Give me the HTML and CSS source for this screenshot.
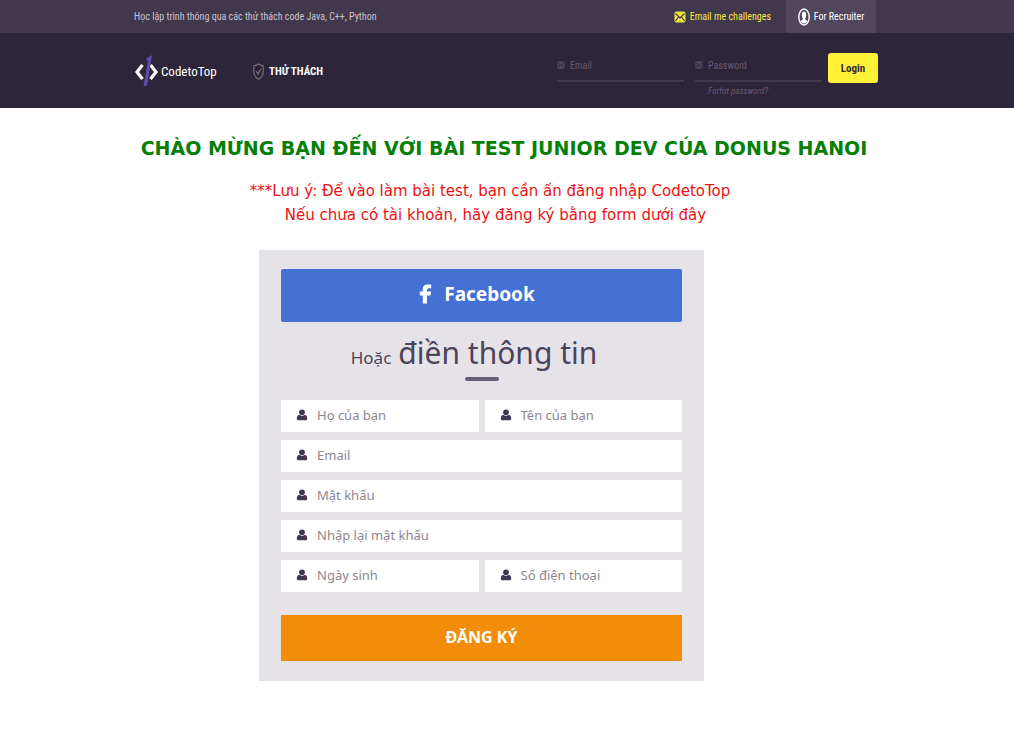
FILE: index.html
```html
<!DOCTYPE html>
<html lang="vi">
<head>
<meta charset="utf-8">
<meta name="viewport" content="width=device-width, initial-scale=1">
<title>CodetoTop</title>
<link rel="stylesheet" href="styles.css">
</head>
<body>
<svg class="sprite" aria-hidden="true">
  <symbol id="user" viewBox="0 0 12 12"><circle cx="6" cy="3.3" r="2.9"/><path d="M3 5.8Q6 8 9 5.8Q11.300 6.300 11.300 9.300Q11.300 11.300 9.800 11.300H2.200Q.7 11.300.7 9.300Q.7 6.300 3 5.800Z"/></symbol>
  <symbol id="mail" viewBox="0 0 12 12"><rect x=".5" y=".5" width="11" height="11" rx="2" fill="currentColor"/><path d="M1.500 2.500 6 7l4.500-4.500M1.500 10 4.500 6M10.500 10 7.500 6" fill="none" stroke="var(--line)" stroke-width="1.200"/></symbol>
</svg>
<header>
  <div class="topbar">
    <p class="tagline">Học lập trình thông qua các thử thách code Java, C++, Python</p>
    <nav class="links">
      <a class="challenges" href="#"><svg class="mail"><use href="#mail"/></svg>Email me challenges</a>
      <a class="recruiter" href="#"><svg class="avatar" viewBox="0 0 12 18"><ellipse cx="6" cy="9" rx="5.200" ry="8" fill="#51465d" stroke="#fff" stroke-width="1.400"/><ellipse cx="6" cy="7" rx="2.200" ry="3.500" fill="#fff"/><path d="M4.800 9h2.400v2.500l2.300 1.500Q8.300 15.500 6 15.500T2.500 13l2.300-1.500Z" fill="#fff"/></svg>For Recruiter</a>
    </nav>
  </div>
  <div class="navbar">
    <a class="brand" href="#"><svg class="logo" viewBox="0 0 24 32"><path d="M8.500 10 3 17l5.500 7M16.500 10l5.500 7-5.500 7" fill="none" stroke="#fff" stroke-width="3.200"/><path d="M12.500 3.500 18 0 13 31H9.500L14 5.500 12.500 6Z" fill="#6249a8"/></svg>CodetoTop</a>
    <a class="menu" href="#"><svg class="shield" viewBox="0 0 10 16"><path d="M5 .8Q7 2.500 9.400 2.500V8.500Q9.400 13 5 15.200Q.6 13 .6 8.500V2.500Q3 2.500 5 .8Z"/><path d="m2.800 7.800 1.700 2.400L7.400 5.600"/></svg>THỬ THÁCH</a>
    <form class="login">
      <label class="cred"><svg class="tiny"><use href="#mail"/></svg><input type="email" placeholder="Email" aria-label="Email"></label>
      <div class="secret">
        <label class="cred"><svg class="tiny"><use href="#mail"/></svg><input type="password" placeholder="Password" aria-label="Password"></label>
        <a class="forgot" href="#">Forfot password?</a>
      </div>
      <button class="enter" type="button">Login</button>
    </form>
  </div>
</header>
<main>
  <h1>CHÀO MỪNG BẠN ĐẾN VỚI BÀI TEST JUNIOR DEV CÚA DONUS HANOI</h1>
  <p class="note">***Lưu ý: Để vào làm bài test, bạn cần ấn đăng nhập CodetoTop</p>
  <p class="note hint">Nếu chưa có tài khoản, hãy đăng ký bằng form dưới đây</p>
  <form class="card">
    <button class="facebook" type="button"><svg class="fb" viewBox="0 0 12 20"><path d="M3.300 19.500V11.500H.3V7.500H3.300V5Q3.300.5 8 .5H11.700V4.300H9Q7.500 4.300 7.500 5.800V7.500H11.600L11 11.500H7.500V19.500Z"/></svg>Facebook</button>
    <h2><small>Hoặc</small> điền thông tin</h2>
    <div class="fields">
      <label class="field half"><svg class="user"><use href="#user"/></svg><input type="text" placeholder="Họ của bạn" aria-label="Họ của bạn"></label>
      <label class="field half"><svg class="user"><use href="#user"/></svg><input type="text" placeholder="Tên của bạn" aria-label="Tên của bạn"></label>
      <label class="field"><svg class="user"><use href="#user"/></svg><input type="email" placeholder="Email" aria-label="Email"></label>
      <label class="field"><svg class="user"><use href="#user"/></svg><input type="password" placeholder="Mật khẩu" aria-label="Mật khẩu"></label>
      <label class="field"><svg class="user"><use href="#user"/></svg><input type="password" placeholder="Nhập lại mật khẩu" aria-label="Nhập lại mật khẩu"></label>
      <label class="field half"><svg class="user"><use href="#user"/></svg><input type="text" placeholder="Ngày sinh" aria-label="Ngày sinh"></label>
      <label class="field half"><svg class="user"><use href="#user"/></svg><input type="tel" placeholder="Số điện thoại" aria-label="Số điện thoại"></label>
    </div>
    <button class="register" type="button">ĐĂNG KÝ</button>
  </form>
</main>
</body>
</html>
```
FILE: styles.css
```css
* { box-sizing: border-box; }
body { margin: 0; background: #fff; font-family: "DejaVu Sans", sans-serif; }
h1, h2, p { margin: 0; }
a { color: inherit; text-decoration: none; }
button, input { border: 0; font: inherit; }
svg { flex: none; }
.sprite { display: none; }

header { background: #2d2539; color: #fff; font-family: "Roboto Condensed", Roboto, sans-serif; white-space: nowrap; }
.topbar, .navbar, .links, .links a, .brand, .menu, .login, .cred { display: flex; }
.topbar { justify-content: space-between; align-items: center; height: 33px; padding: 0 138px 0 134px; background: #42384e; font-size: 10px; }
.tagline { color: #c8c3cd; }
.links { gap: 15px; height: 100%; }
.links a { align-items: center; gap: 4px; }
.challenges { color: #f3e93e; --line: #42384e; }
.mail { width: 12px; height: 12px; }
.recruiter { width: 90px; justify-content: center; background: #51465d; }
.avatar { width: 12px; height: 18px; }

.navbar { align-items: flex-start; height: 75px; padding: 20px 136px 0 134px; }
.brand { align-items: center; gap: 3px; width: 119px; height: 36px; font-size: 13px; }
.logo { width: 24px; height: 32px; }
.menu { align-items: center; gap: 5px; height: 36px; font-size: 11px; font-weight: bold; }
.shield { width: 11px; height: 17px; fill: none; stroke: #81798a; stroke-width: 1; }
.login { gap: 11px; margin-left: auto; font-size: 10px; color: #665a74; }
.cred { align-items: center; gap: 5px; width: 127px; height: 29px; padding-bottom: 3px; border-bottom: 2px solid #43384f; --line: #2d2539; }
.cred input { width: 100%; min-width: 0; padding: 0; background: none; color: #d8d2df; }
.cred input::placeholder { color: #665a74; opacity: 1; }
.tiny { width: 8px; height: 8px; color: #51465d; }
.forgot { display: block; padding: 4px 0 0 13px; font-size: 9px; font-style: italic; }
.enter { width: 50px; height: 30px; margin-left: -5px; padding: 0; border-radius: 3px; background: #fff137; color: #352c35; font-size: 11px; font-weight: bold; }

main { display: flex; flex-direction: column; align-items: center; padding: 27px 0 62px; }
h1 { padding-right: 6px; color: #067f06; font-size: 19px; line-height: 26px; }
.note { margin-top: 18px; padding-right: 34px; color: #ee1111; font-size: 15px; line-height: 24px; }
.hint { margin-top: 0; padding-right: 23px; }
.card { width: 445px; margin: 23px 51px 0 0; padding: 19px 22px 20px; background: #e5e3e8; font-family: "Noto Sans", sans-serif; }
.facebook, .register { display: flex; justify-content: center; align-items: center; width: 100%; color: #fff; font-weight: bold; }
.facebook { gap: 12px; height: 53px; padding: 0 9px 3px 0; border-radius: 2px; background: #4471d3; font-size: 19px; }
.fb { width: 13px; height: 20px; fill: #fff; }
h2 { display: flex; flex-wrap: wrap; justify-content: center; align-items: baseline; gap: 0 7px; padding: 11px 15px 0 0; color: #4b4359; font-size: 30px; font-weight: normal; line-height: 40px; }
h2 small { font-size: 17px; line-height: 20px; }
h2::after { content: ""; flex: none; width: 34px; height: 4px; margin: 4px 150px 19px 166px; border-radius: 2px; background: #675e78; }
.fields { display: flex; flex-wrap: wrap; gap: 8px 6px; }
.field { display: flex; align-items: center; gap: 9px; width: 100%; height: 32px; padding: 0 15px 2px; background: #fff; }
.half { flex: 1 1 40%; min-width: 0; }
.field input { flex: 1; min-width: 0; padding: 0; background: none; color: #4b4359; font-size: 13px; }
.field input::placeholder { color: #8b8790; opacity: 1; }
.user { width: 12px; height: 12px; fill: #3f3750; }
.register { height: 46px; margin-top: 23px; padding: 0 0 2px; background: #f28d0a; font-size: 16px; }
```
